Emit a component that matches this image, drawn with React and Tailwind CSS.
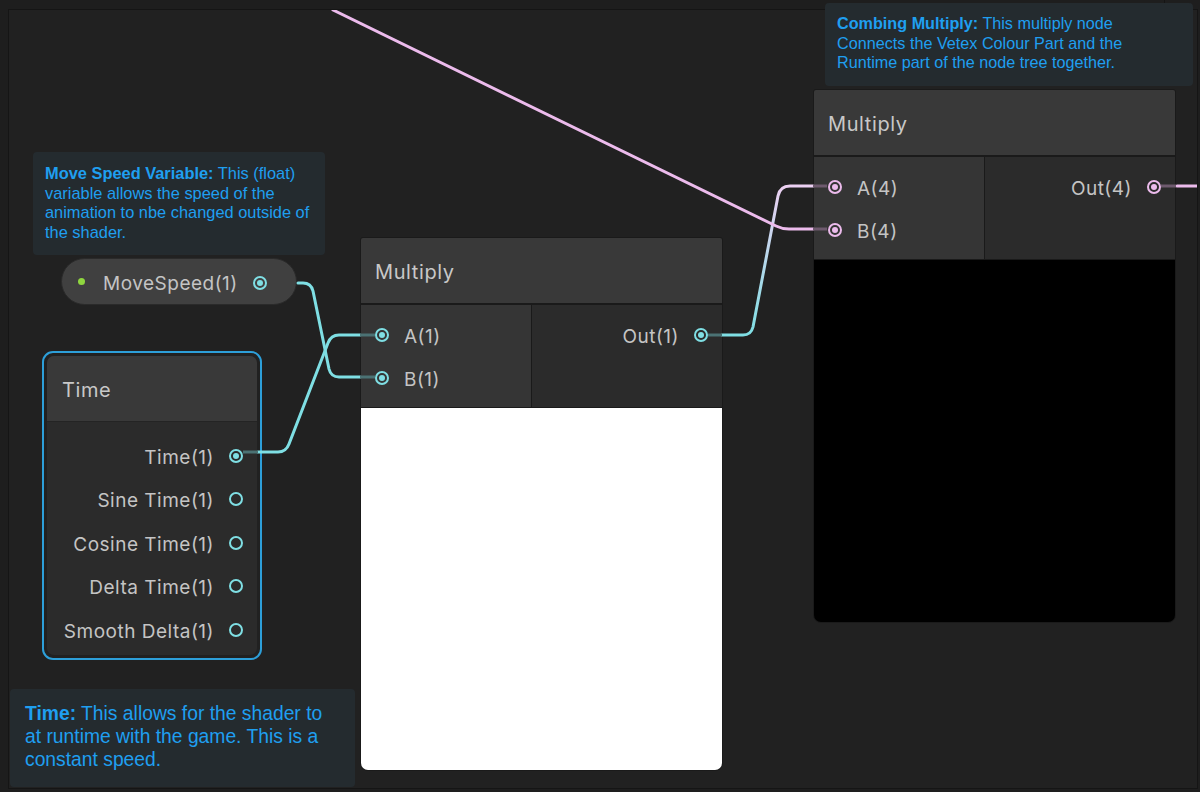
import React from "react";

const CYAN = "#7fdfe4";
const PINK = "#ecbbec";

function Port({ color, connected }) {
  return (
    <span
      className="flex h-[14px] w-[14px] shrink-0 items-center justify-center rounded-full border-2"
      style={{ borderColor: color }}
    >
      {connected && <span className="h-[6px] w-[6px] rounded-full" style={{ background: color }} />}
    </span>
  );
}

function Comment({ className, children }) {
  return (
    <div
      className={`absolute rounded-[4px] bg-[#242b2f] text-[#1f9ff0] ${className}`}
      style={{ fontFamily: '"Liberation Sans", Arial, sans-serif' }}
    >
      {children}
    </div>
  );
}

function MultiplyNode({ left, top, color, inputs, output, preview }) {
  return (
    <div
      className="absolute flex w-[363px] flex-col overflow-hidden rounded-t-[3px] rounded-b-[8px] border border-[#1a1a1a] bg-[#1a1a1a] tracking-[0.5px] text-[#c4c4c4]"
      style={{ left, top, fontFamily: "Inter, 'Noto Sans', sans-serif" }}
    >
      <div className="flex h-[65px] items-center bg-[#393939] pl-[14px] pt-[2px] text-[20px] tracking-[0.6px] text-[#c8c8c8]">
        Multiply
      </div>
      <div className="mt-[2px] flex h-[102px]">
        <div className="flex w-[170px] flex-col bg-[#353535] pt-[8px]">
          {inputs.map((label) => (
            <div key={label} className="flex h-[43px] items-center gap-[15px] pl-[14px] text-[19px]">
              <Port color={color} connected />
              <span className="pt-[6px]">{label}</span>
            </div>
          ))}
        </div>
        <div className="ml-[1px] flex flex-1 flex-col bg-[#2b2b2b] pt-[8px]">
          <div className="flex h-[43px] items-center justify-end gap-[15px] pr-[14px] text-[19px]">
            <span className="pt-[6px]">{output}</span>
            <Port color={color} connected />
          </div>
        </div>
      </div>
      <div className={`mt-[1px] h-[362px] ${preview}`} />
    </div>
  );
}

function TimeNode() {
  const rows = ["Time(1)", "Sine Time(1)", "Cosine Time(1)", "Delta Time(1)", "Smooth Delta(1)"];
  return (
    <div className="absolute left-[42px] top-[351px] h-[309px] w-[220px] rounded-[11px] border-2 border-[#2d9fd9] p-[3px]">
      <div
        className="flex h-full flex-col overflow-hidden rounded-[7px] bg-[#2b2b2b] tracking-[0.5px] text-[#c4c4c4]"
        style={{ fontFamily: "Inter, 'Noto Sans', sans-serif" }}
      >
        <div className="flex h-[65px] items-center bg-[#393939] pl-[15px] pt-[2px] text-[20px] tracking-[0.6px] text-[#c8c8c8]">
          Time
        </div>
        <div className="flex flex-col border-t border-[#242424] pt-[12px]">
          {rows.map((r, i) => (
            <div key={r} className="flex h-[43.5px] items-center justify-end gap-[15px] pr-[14px] text-[19px]">
              <span className="pt-[4px]">{r}</span>
              <Port color={CYAN} connected={i === 0} />
            </div>
          ))}
        </div>
      </div>
    </div>
  );
}

function Wires() {
  return (
    <svg className="pointer-events-none absolute left-0 top-0" width="1200" height="792" fill="none">
      <defs>
        <linearGradient id="outGrad" gradientUnits="userSpaceOnUse" x1="0" y1="335" x2="0" y2="186">
          <stop offset="0" stopColor={CYAN} />
          <stop offset="1" stopColor="#ecd0f2" />
        </linearGradient>
        <clipPath id="canvasClip">
          <rect x="9" y="10" width="1188" height="778" />
        </clipPath>
      </defs>
      <g clipPath="url(#canvasClip)" strokeWidth="3" strokeLinecap="round" strokeLinejoin="round">
        {/* movespeed -> B(1) */}
        <path d="M298 283 L303 283 Q311 283 313 291 L329 369 Q331 377 339 377 L360 377" stroke={CYAN} />
        {/* time -> A(1) */}
        <path d="M258 452 L278 452 Q286 452 289 444 L328 343 Q331 335 339 335 L360 335" stroke={CYAN} />
        {/* out(1) -> A(4) */}
        <path d="M722 335 L743 335 Q751 335 753 327 L778 196 Q780 186 790 186 L813 186" stroke="url(#outGrad)" />
        {/* upstream -> B(4) */}
        <path d="M333 10 L776 226 Q782 229 789 229 L813 229" stroke={PINK} />
        {/* out(4) -> right */}
        <path d="M1177 186 L1200 186" stroke={PINK} />
      </g>
      <g strokeWidth="3">
        <path d="M243 452 L258 452" stroke="#4b7274" />
        <path d="M360 335 L375 335 M360 377 L375 377" stroke="#4b7274" />
        <path d="M708 335 L722 335" stroke="#4b7274" />
        <path d="M813 186 L827 186 M813 229 L827 229" stroke="#6e5a6e" />
        <path d="M1161 186 L1176 186" stroke="#6e5a6e" />
      </g>
    </svg>
  );
}

export default function App() {
  return (
    <div className="relative h-[792px] w-[1200px] overflow-hidden bg-[#1e1e1e] pb-[3px] pl-[8px] pr-[2px] pt-[9px]">
      <div className="h-full w-full border border-[#151515] bg-[#212121]" />
      <div className="absolute left-[1164px] top-0 h-[9px] w-px bg-[#151515]" />

      <Comment className="left-[825px] top-[3px] h-[83px] w-[368px] pl-[12px] pt-[11px] text-[16.2px] leading-[19.5px]">
        <b>Combing Multiply:</b> This multiply node
        <br />
        Connects the Vetex Colour Part and the
        <br />
        Runtime part of the node tree together.
      </Comment>

      <Comment className="left-[33px] top-[152px] h-[103px] w-[292px] pl-[12px] pt-[12px] text-[16.4px] leading-[19.7px]">
        <b>Move Speed Variable:</b> This (float)
        <br />
        variable allows the speed of the
        <br />
        animation to nbe changed outside of
        <br />
        the shader.
      </Comment>

      <Comment className="left-[10px] top-[689px] h-[98px] w-[345px] pl-[15px] pt-[13px] text-[19.3px] leading-[23px]">
        <b>Time:</b> This allows for the shader to
        <br />
        at runtime with the game. This is a
        <br />
        constant speed.
      </Comment>

      <div
        className="absolute left-[61px] top-[258px] flex h-[47px] w-[236px] items-center rounded-full border border-[#2a2a2a] bg-[#404040] pl-[16px] text-[19px] tracking-[0.5px] text-[#c4c4c4]"
        style={{ fontFamily: "Inter, 'Noto Sans', sans-serif" }}
      >
        <span className="h-[7px] w-[7px] rounded-full bg-[#8fd63f]" />
        <span className="ml-[18px] pt-[6px]">MoveSpeed(1)</span>
        <span className="ml-[15px] pt-[2px]">
          <Port color={CYAN} connected />
        </span>
      </div>

      <TimeNode />

      <MultiplyNode left={360} top={237} color={CYAN} inputs={["A(1)", "B(1)"]} output="Out(1)" preview="bg-white" />
      <MultiplyNode left={813} top={89} color={PINK} inputs={["A(4)", "B(4)"]} output="Out(4)" preview="bg-black" />

      <Wires />
    </div>
  );
}
